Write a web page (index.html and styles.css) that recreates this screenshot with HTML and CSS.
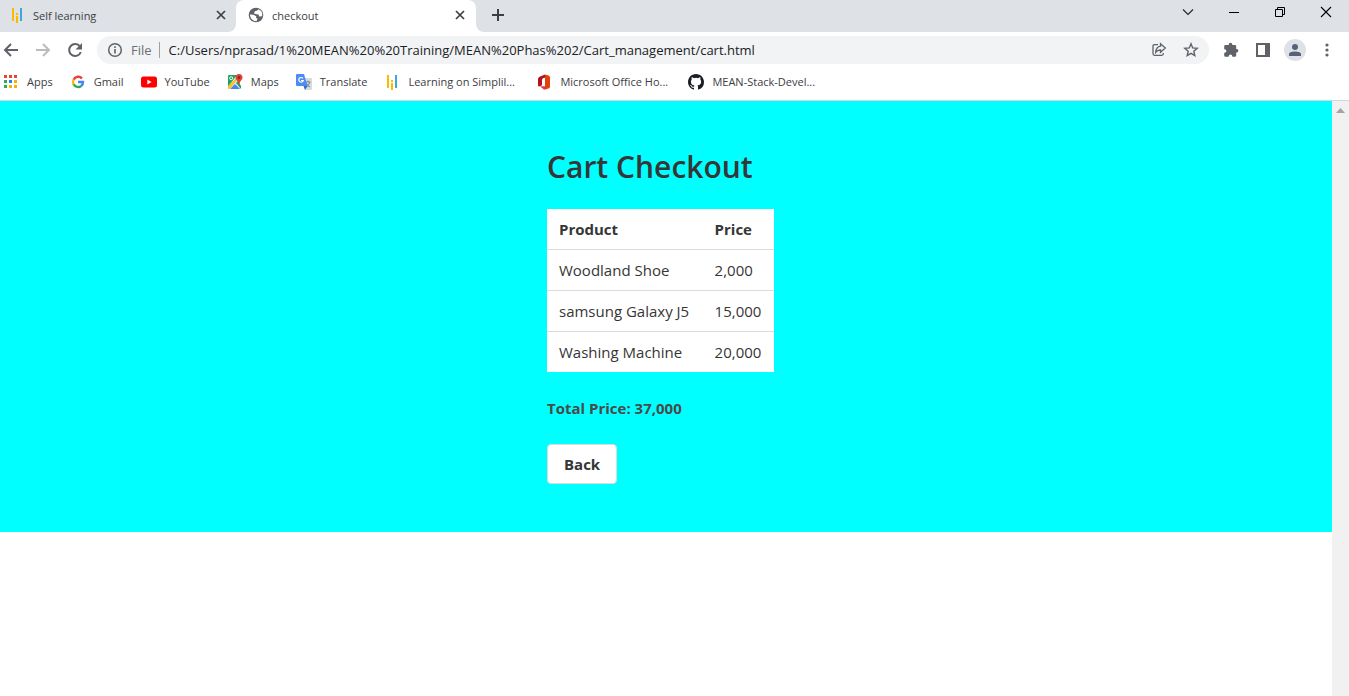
FILE: index.html
```html
<!DOCTYPE html>
<html lang="en">
<head>
<meta charset="utf-8">
<title>checkout</title>
<link rel="stylesheet" href="styles.css">
</head>
<body>
<header class="browser">
  <div class="tabstrip">
    <div class="tab">
      <svg class="icon" viewBox="0 0 16 16"><path fill="#fcb900" d="M3 1h2v13H3zM7 6h2v2H7zM7 9h2v7H7z"/><path fill="#3ea8dc" d="M11 1h2v13h-2z"/></svg>
      <span class="tab-title">Self learning</span>
      <button class="tab-close" aria-label="Close Self learning"><svg width="10" height="10" viewBox="0 0 10 10"><path d="M1 1l8 8M9 1l-8 8" stroke="#3c4043" stroke-width="1.7"/></svg></button>
    </div>
    <div class="tab tab-active">
      <svg class="icon" viewBox="0 0 16 16"><circle cx="8" cy="8" r="7.3" fill="#5f6368"/><path d="M10.500 2.300L9.300 3.600 6.800 4.200 6 6.500 8.500 7.300 10.500 7.500 11.200 9.500 14 9.300A6 6 0 0 0 10.500 2.300zM1.900 7.500l3.600.2 2.800 1.600-.3 1.600 1.500.7-.9 2.600C4.500 14 2.200 11.500 1.900 7.500z" fill="#fff"/></svg>
      <span class="tab-title">checkout</span>
      <button class="tab-close" aria-label="Close checkout"><svg width="10" height="10" viewBox="0 0 10 10"><path d="M1 1l8 8M9 1l-8 8" stroke="#3c4043" stroke-width="1.7"/></svg></button>
    </div>
    <button class="new-tab" aria-label="New tab"><svg width="12" height="12" viewBox="0 0 12 12"><path d="M6 0v12M0 6h12" stroke="#3c4043" stroke-width="2"/></svg></button>
    <div class="window-controls">
      <button aria-label="Search tabs"><svg width="12" height="12" viewBox="0 0 12 12"><path d="M1 3.500l5 5 5-5" fill="none" stroke="#222" stroke-width="1.100"/></svg></button>
      <button aria-label="Minimize"><svg width="12" height="12" viewBox="0 0 12 12"><path d="M1 6h10v1H1z"/></svg></button>
      <button aria-label="Restore"><svg width="12" height="12" viewBox="0 0 12 12"><path d="M1.500 3.500h7v7h-7zM3.500 3.500v-2h7v7h-2" fill="none" stroke="#000"/></svg></button>
      <button aria-label="Close"><svg width="12" height="12" viewBox="0 0 12 12"><path d="M1 1l10 10M11 1L1 11" stroke="#000" stroke-width="1.100"/></svg></button>
    </div>
  </div>
  <div class="toolbar">
    <button class="tool" aria-label="Back"><svg width="16" height="16" viewBox="0 0 16 16"><path d="M15 8H2M8 2L2 8l6 6" fill="none" stroke="#5f6368" stroke-width="2"/></svg></button>
    <button class="tool" aria-label="Forward"><svg width="16" height="16" viewBox="0 0 16 16"><path d="M1 8h13M8 2l6 6-6 6" fill="none" stroke="#babcbe" stroke-width="2"/></svg></button>
    <button class="tool" aria-label="Reload"><svg width="16" height="16" viewBox="0 0 16 16"><path d="M13 4.500A6 6 0 1 0 13.800 10" fill="none" stroke="#5f6368" stroke-width="2"/><path d="M15 1v6.500H8.500z" fill="#5f6368"/></svg></button>
    <div class="omnibox">
      <svg class="icon" viewBox="0 0 16 16"><circle cx="8" cy="8" r="6.300" fill="none" stroke="#5f6368" stroke-width="1.500"/><path d="M7.200 7h1.600v4.500H7.200zM7.200 4.300h1.600v1.600H7.200z" fill="#5f6368"/></svg>
      <label class="scheme" for="address">File</label>
      <input class="address" id="address" type="text" value="C:/Users/nprasad/1%20MEAN%20%20Training/MEAN%20Phas%202/Cart_management/cart.html">
      <button class="omni-button" aria-label="Share"><svg width="16" height="16" viewBox="0 0 16 16" fill="none" stroke="#5f6368" stroke-width="1.300"><path d="M7 2.700H3.500Q2 2.700 2 4.200v7.600q0 1.500 1.500 1.500h7.300q1.500 0 1.500-1.500V11"/><path d="M9.500 1.800L14.300 6 9.500 10.200V8Q6.500 7.900 4.700 10.300 5.200 4.800 9.500 4.200z"/></svg></button>
      <button class="omni-button" aria-label="Bookmark this page"><svg width="16" height="16" viewBox="0 0 16 16"><path d="M8 1.800l1.700 4.100 4.500.4-3.400 2.900 1 4.400L8 11.300l-3.800 2.300 1-4.400-3.400-2.900 4.500-.4z" fill="none" stroke="#5f6368" stroke-width="1.400"/></svg></button>
    </div>
    <div class="actions">
      <button aria-label="Extensions"><svg width="16" height="16" viewBox="0 0 16 16"><path fill="#5f6368" d="M5.700 2.500a1.800 1.800 0 0 1 3.600 0V3H12q1.200 0 1.200 1.200v2.700h.4a1.800 1.800 0 0 1 0 3.600h-.4v3q0 1.300-1.200 1.300H9.300v-.4a1.800 1.800 0 0 0-3.600 0v.4H2.500q-1.300 0-1.300-1.300v-2.700h.4a1.800 1.800 0 0 0 0-3.600h-.4V4.200Q1.200 3 2.500 3h3.200z"/></svg></button>
      <button aria-label="Side panel"><svg width="14" height="14" viewBox="0 0 14 14"><path fill="#5f6368" fill-rule="evenodd" d="M0 0h14v14H0zM2 2v10h7V2z"/></svg></button>
      <button aria-label="Profile"><svg width="22" height="22" viewBox="0 0 22 22"><circle cx="11" cy="11" r="11" fill="#dee1e6"/><circle cx="11" cy="8" r="3" fill="#56617a"/><path d="M5 17v-2q0-2.500 6-2.500t6 2.500v2z" fill="#56617a"/></svg></button>
      <button aria-label="Menu"><svg width="16" height="16" viewBox="0 0 16 16" fill="#5f6368"><circle cx="8" cy="3" r="1.600"/><circle cx="8" cy="8" r="1.600"/><circle cx="8" cy="13" r="1.600"/></svg></button>
    </div>
  </div>
  <nav class="bookmarks">
    <a href="#"><svg class="icon" viewBox="0 0 16 16"><path fill="#ea4335" d="M1 1h3v3H1zM6 1h3v3H6zM11 1h3v3h-3z"/><path fill="#34a853" d="M1 6h3v3H1zM1 11h3v3H1z"/><path fill="#1a86f0" d="M6 6h3v3H6z"/><path fill="#fbaf05" d="M11 6h3v3h-3zM6 11h3v3H6zM11 11h3v3h-3z"/></svg>Apps</a>
    <a href="#"><svg class="icon" viewBox="0 0 16 16" fill="none" stroke-width="2.400"><path stroke="#ea4335" d="M12 4.500A5 5 0 0 0 3.600 5.700"/><path stroke="#fbbc05" d="M3.600 5.500a5 5 0 0 0 0 5"/><path stroke="#34a853" d="M3.600 10.300a5 5 0 0 0 7.700 1.500"/><path stroke="#4285f4" d="M8 8h5a5 5 0 0 1-1.800 4"/></svg>Gmail</a>
    <a href="#"><svg class="icon" viewBox="0 0 16 16"><rect y="2.500" width="16" height="11" rx="2.500" fill="#f00"/><path d="M6.300 5.500v5l4.300-2.500z" fill="#fff"/></svg>YouTube</a>
    <a href="#"><svg class="icon" viewBox="0 0 16 16"><path fill="#1fa463" d="M1 2q0-1 1-1h8L1 13z"/><path fill="#e8eaed" d="M9 5l4 4v6H4z"/><path fill="#4285f4" d="M3 15l5-5 5 5z"/><path fill="#fbc02d" d="M1 12l8-8 1 2-7 9H2q-1 0-1-1z"/><path fill="#1fa463" d="M9 9l2-2 3 5v3z"/><circle cx="4.200" cy="4.200" r="1.500" fill="none" stroke="#fff"/><path fill="#db4437" d="M12 0a3.500 3.500 0 0 1 3.500 3.500C15.500 6 12.800 7 12.500 10h-1C11.200 7 8.500 6 8.500 3.500A3.500 3.500 0 0 1 12 0z"/><circle cx="12" cy="3.600" r="1.300" fill="#8c241b"/></svg>Maps</a>
    <a href="#"><svg class="icon" viewBox="0 0 16 16"><path fill="#d8dadd" d="M6 4h9q1 0 1 1v10q0 1-1 1H9z"/><path d="M9.500 8h5M12 6.500V8M13.800 8q-.8 3.500-3.500 5M10.500 9.500q1 2.500 3.500 3.500" fill="none" stroke="#78828c"/><path fill="#4c8bf5" d="M1 0h7l3.500 12H1q-1 0-1-1V1q0-1 1-1z"/><path fill="#3367d6" d="M7.500 12h4L9 16z"/><path d="M7 4.500A2.300 2.300 0 1 0 7.300 6.500H5" fill="none" stroke="#fff" stroke-width="1.200"/></svg>Translate</a>
    <a class="truncated" href="#"><svg class="icon" viewBox="0 0 16 16"><path fill="#fcb900" d="M3 1h2v13H3zM7 6h2v2H7zM7 9h2v7H7z"/><path fill="#3ea8dc" d="M11 1h2v13h-2z"/></svg>Learning on Simplil...</a>
    <a class="truncated" href="#"><svg class="icon" viewBox="0 0 16 16"><path fill="#e2410b" d="M9 .5l3.500 1q1.500.5 1.500 2v9q0 1.500-1.500 2L9 15.500z"/><path fill="#b5121b" d="M9 .5v3.200L7.500 4Q6 4.500 6 6v4.500q0 .8-.8 1.200L3 12.500q-1 0-1-1.500V5q0-1.500 1.500-2.200z"/><path fill="#e0364a" d="M4 12.300h5.500v3.200q-1 .3-2-.3z"/></svg>Microsoft Office Ho...</a>
    <a class="truncated" href="#"><svg class="icon" viewBox="0 0 16 16"><path fill="#1b1f23" fill-rule="evenodd" d="M8 0C3.580 0 0 3.580 0 8c0 3.540 2.290 6.530 5.470 7.590.4.070.55-.17.55-.38 0-.19-.01-.82-.01-1.490-2.010.37-2.530-.49-2.690-.94-.09-.23-.48-.94-.82-1.130-.28-.15-.68-.52-.01-.53.63-.01 1.080.58 1.230.82.72 1.210 1.870.87 2.330.66.07-.52.28-.87.51-1.070-1.780-.2-3.640-.89-3.640-3.950 0-.87.31-1.590.82-2.150-.08-.2-.36-1.020.08-2.120 0 0 .67-.21 2.200.82a7.600 7.600 0 0 1 4 0c1.530-1.040 2.200-.82 2.200-.82.44 1.100.16 1.920.08 2.120.51.56.82 1.270.82 2.150 0 3.070-1.870 3.750-3.650 3.950.29.25.54.73.54 1.480 0 1.070-.01 1.930-.01 2.200 0 .21.15.46.55.38A8.010 8.010 0 0 0 16 8c0-4.420-3.580-8-8-8z"/></svg>MEAN-Stack-Devel...</a>
  </nav>
</header>
<div class="viewport">
  <main class="page">
    <section class="section">
      <div class="cart">
        <h1 class="title">Cart Checkout</h1>
        <table class="table">
          <thead><tr><th>Product</th><th>Price</th></tr></thead>
          <tbody>
            <tr><td>Woodland Shoe</td><td>2,000</td></tr>
            <tr><td>samsung Galaxy J5</td><td>15,000</td></tr>
            <tr><td>Washing Machine</td><td>20,000</td></tr>
          </tbody>
        </table>
        <p class="total">Total Price: 37,000</p>
        <button class="button">Back</button>
      </div>
    </section>
  </main>
  <div class="scrollbar"><svg width="9" height="5" viewBox="0 0 9 5"><path d="M4.500 0L9 5H0z" fill="#a3a3a3"/></svg></div>
</div>
</body>
</html>
```
FILE: styles.css
```css
* { box-sizing: border-box; }
body {
  margin: 0;
  min-height: 100vh;
  display: flex;
  flex-direction: column;
  background: #fff;
  color: #363636;
  font-family: "Open Sans", "Noto Sans", sans-serif;
}
button {
  border: 0;
  padding: 0;
  background: none;
  font: inherit;
  color: inherit;
  display: flex;
  align-items: center;
  justify-content: center;
}
svg { display: block; }
.icon { width: 16px; height: 16px; flex: none; }

.browser { border-bottom: 1px solid #d4d6d9; font-size: 11px; color: #3c4043; }
.tabstrip { display: flex; height: 32px; background: #fff; }
.tab {
  display: flex;
  align-items: center;
  gap: 8px;
  width: 240px;
  height: 32px;
  padding: 0 11px 2px 12px;
}
.tab:first-child {
  width: 236px;
  padding-left: 9px;
  padding-right: 10px;
  background: #dee1e6;
  border-radius: 0 0 8px 0;
}
.tab-active {
  background: linear-gradient(#dee1e6, #dee1e6) top / 100% 8px no-repeat, #fff;
  position: relative;
  z-index: 0;
}
.tab-active::before {
  content: "";
  position: absolute;
  inset: 0;
  z-index: -1;
  border-radius: 8px 8px 0 0;
  background: #fff;
}
.tab-title { flex: 1; }
.tab-close { width: 10px; height: 16px; }
.new-tab { width: 44px; height: 32px; padding-bottom: 2px; background: #dee1e6; border-radius: 0 0 0 8px; }
.window-controls { display: flex; flex: 1; justify-content: flex-end; padding-bottom: 8px; background: #dee1e6; }
.window-controls button { width: 46px; }

.toolbar { display: flex; align-items: center; height: 36px; padding-left: 3px; }
.tool { width: 16px; height: 28px; margin-right: 16px; }
.omnibox {
  flex: 1;
  display: flex;
  align-items: center;
  height: 28px;
  margin-left: -2px;
  padding: 0 10px;
  border-radius: 14px;
  background: #f1f3f4;
  font-size: 13px;
}
.scheme { margin-left: 8px; padding-right: 7px; line-height: 16px; border-right: 1px solid #9aa0a6; color: #6b6f74; }
.address {
  flex: 1;
  min-width: 0;
  border: 0;
  padding: 0 9px;
  background: none;
  font: inherit;
  color: #202124;
  outline: 0;
}
.omni-button { width: 16px; margin-left: 16px; }
.actions { display: flex; padding: 0 6px; }
.actions button { width: 32px; height: 28px; }

.bookmarks { display: flex; gap: 17px; height: 32px; padding: 0 3px 5px; }
.bookmarks a { display: flex; align-items: center; gap: 8px; color: inherit; text-decoration: none; white-space: nowrap; }
.bookmarks .truncated { min-width: 135px; }

.viewport { flex: 1; display: flex; }
.page { flex: 1; }
.section { display: flex; justify-content: center; padding: 48px 24px; background: #0ff; }
.cart { width: 238px; font-size: 15px; line-height: 24px; }
.title { margin: 0 0 24px; font-size: 30px; line-height: 36px; font-weight: 600; white-space: nowrap; }
.table { min-width: 227px; margin-bottom: 24px; border-collapse: collapse; background: #fff; }
.table th, .table td { padding: 8px 12px; text-align: left; border-bottom: 1px solid #dbdbdb; }
.table tbody tr:last-child td { border-bottom: 0; }
.total { margin: 0 0 24px; font-weight: 700; color: #4a4a4a; }
.button { height: 40px; padding: 0 16px; border: 1px solid #dbdbdb; border-radius: 4px; background: #fff; font-weight: 700; }
.scrollbar { width: 17px; padding: 7px 4px; background: #f1f1f1; }
```
